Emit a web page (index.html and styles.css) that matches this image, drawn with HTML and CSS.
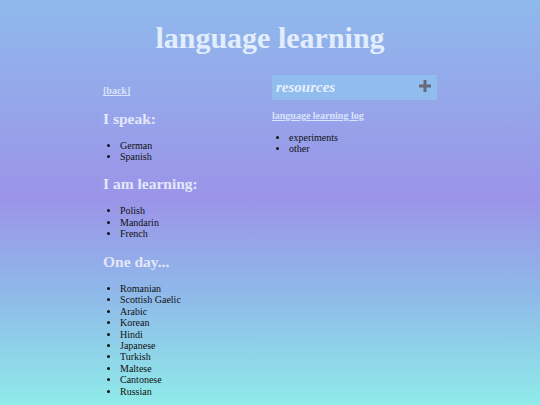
FILE: index.html
```html
<!DOCTYPE html>
<html>
<head>
<meta charset="utf-8">
<link rel="stylesheet" href="styles.css">
</head>
<body>
<h1 class="title">language learning</h1>
<div class="wrap">
  <div class="left">
    <a class="link" href="#">[back]</a>
    <h2 class="heading">I speak:</h2>
    <ul class="list">
      <li>German</li>
      <li>Spanish</li>
    </ul>
    <h2 class="heading">I am learning:</h2>
    <ul class="list">
      <li>Polish</li>
      <li>Mandarin</li>
      <li>French</li>
    </ul>
    <h2 class="heading">One day...</h2>
    <ul class="list">
      <li>Romanian</li>
      <li>Scottish Gaelic</li>
      <li>Arabic</li>
      <li>Korean</li>
      <li>Hindi</li>
      <li>Japanese</li>
      <li>Turkish</li>
      <li>Maltese</li>
      <li>Cantonese</li>
      <li>Russian</li>
    </ul>
  </div>
  <div class="right">
    <div class="box">
      <span class="box-title">resources</span>
      <svg class="plus" width="14" height="14" viewBox="0 0 14 14"><path d="M7 1V13M1 7H13" stroke="#666a78" stroke-width="3"/></svg>
    </div>
    <a class="link log" href="#">language learning log</a>
    <ul class="list sub">
      <li>experiments</li>
      <li>other</li>
    </ul>
  </div>
</div>
</body>
</html>
```
FILE: styles.css
```css
html, body {
  margin: 0;
  padding: 0;
  height: 100%;
}
body {
  font-family: "Liberation Serif", serif;
  background: linear-gradient(to bottom, #8fb9ec 0%, #9b94e8 49%, #8fb8e9 72%, #8febe9 100%);
  overflow: hidden;
}
.title {
  margin: 0;
  padding-top: 20px;
  height: 75px;
  box-sizing: border-box;
  line-height: 36px;
  font-size: 30px;
  font-weight: bold;
  color: #e2eefe;
  text-align: center;
}
.wrap {
  width: 334px;
  margin: 0 auto;
  display: flex;
}
.left {
  width: 169px;
  padding-top: 10px;
}
.right {
  width: 165px;
  display: flex;
  flex-direction: column;
  align-items: flex-start;
}
.link {
  display: block;
  font-size: 10px;
  line-height: 11.5px;
  font-weight: bold;
  color: #d9e3fb;
  text-decoration: underline;
}
.heading {
  margin: 12px 0 11px;
  font-size: 15.5px;
  line-height: 20px;
  font-weight: bold;
  color: #e3e7fa;
}
.list {
  margin: 0;
  padding-left: 17px;
  font-size: 10px;
  line-height: 11.45px;
  color: #111;
}
.box {
  align-self: stretch;
  height: 25px;
  background: #90bdee;
  display: flex;
  align-items: center;
  justify-content: space-between;
  padding: 0 5px 0 4px;
  box-sizing: border-box;
}
.box-title {
  font-size: 15px;
  font-weight: bold;
  font-style: italic;
  color: #e8f0ff;
}
.plus {
  display: block;
  margin-top: -4px;
}
.log {
  margin-top: 10px;
}
.sub {
  margin-top: 10px;
}
```
